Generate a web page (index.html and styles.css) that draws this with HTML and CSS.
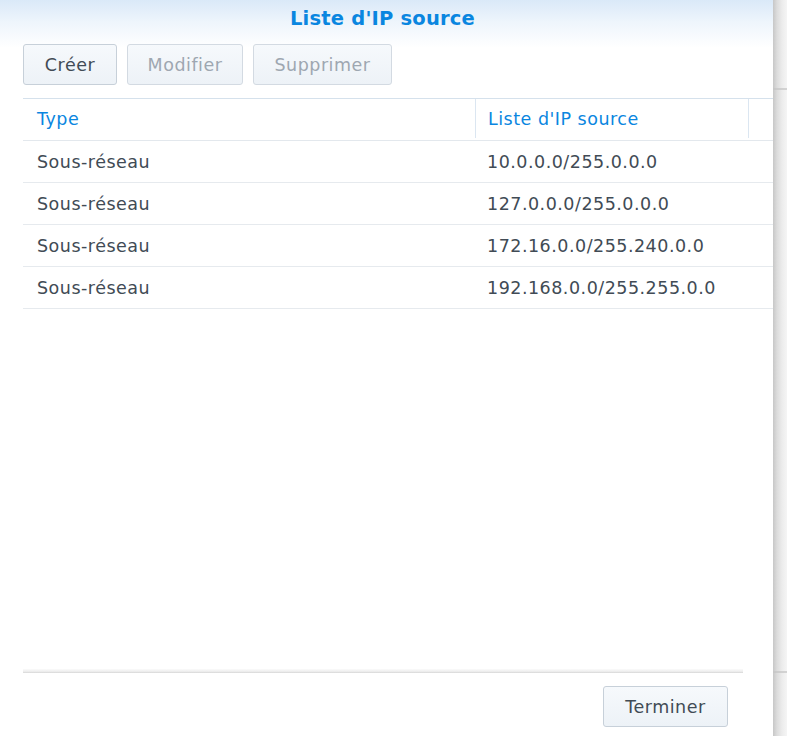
FILE: index.html
```html
<!DOCTYPE html>
<html lang="fr">
<head>
<meta charset="utf-8">
<title>Liste d'IP source</title>
<link rel="stylesheet" href="styles.css">
</head>
<body>
<div class="page">
  <div class="window">
    <div class="title">Liste d'IP source</div>
    <div class="toolbar">
      <button class="btn btn-create">Créer</button>
      <button class="btn btn-modify" disabled>Modifier</button>
      <button class="btn btn-delete" disabled>Supprimer</button>
    </div>
    <div class="grid">
      <div class="grid-head">
        <div class="hcell c1">Type</div>
        <div class="hcell c2">Liste d'IP source</div>
        <div class="hcell c3"></div>
      </div>
      <div class="row"><div class="cell c1">Sous-réseau</div><div class="cell c2">10.0.0.0/255.0.0.0</div></div>
      <div class="row"><div class="cell c1">Sous-réseau</div><div class="cell c2">127.0.0.0/255.0.0.0</div></div>
      <div class="row"><div class="cell c1">Sous-réseau</div><div class="cell c2">172.16.0.0/255.240.0.0</div></div>
      <div class="row"><div class="cell c1">Sous-réseau</div><div class="cell c2">192.168.0.0/255.255.0.0</div></div>
    </div>
    <div class="footer">
      <div class="separator"></div>
      <div class="footer-bar">
        <button class="btn btn-done">Terminer</button>
      </div>
    </div>
  </div>
  <div class="gutter">
    <div class="gline gline-top"></div>
    <div class="gline gline-bottom"></div>
  </div>
</div>
</body>
</html>
```

FILE: styles.css
```css
html, body {
  margin: 0;
  padding: 0;
}
body {
  background: #f4f4f4;
  font-family: "DejaVu Sans", Verdana, sans-serif;
  color: #414b55;
}
.page {
  display: flex;
  width: 787px;
  height: 736px;
  overflow: hidden;
}
.window {
  width: 773px;
  height: 736px;
  flex: none;
  display: flex;
  flex-direction: column;
  background: linear-gradient(to bottom, #dae9f8 0px, #eef5fc 22px, #ffffff 48px) no-repeat, #ffffff;
}
.title {
  height: 36px;
  line-height: 38px;
  text-align: center;
  padding-right: 8px;
  font-weight: bold;
  font-size: 19.5px;
  letter-spacing: 0.2px;
  color: #0a86e0;
}
.toolbar {
  display: flex;
  gap: 10px;
  padding-left: 23px;
  margin-top: 8px;
  height: 41px;
}
.btn {
  font-family: "DejaVu Sans", Verdana, sans-serif;
  font-size: 17.5px;
  letter-spacing: 0.5px;
  height: 41px;
  border: 1px solid #c7d0d9;
  border-radius: 3px;
  background: linear-gradient(to bottom, #f6f9fc, #edf2f7);
  color: #414b55;
  padding: 1px 0 0 0;
  margin: 0;
}
.btn[disabled] {
  color: #9ea7b1;
  border-color: #d3dae2;
}
.btn-create { width: 94px; }
.btn-modify { width: 116px; }
.btn-delete { width: 139px; }
.btn-done { width: 125px; }
.grid {
  flex: 1;
  margin-top: 13px;
  margin-left: 23px;
}
.grid-head {
  display: flex;
  height: 41px;
  border-top: 1px solid #d5e1ec;
  border-bottom: 1px solid #e3e8ed;
  font-size: 17.5px;
  letter-spacing: 0.5px;
  color: #0a86e0;
}
.hcell {
  display: flex;
  align-items: center;
  box-sizing: border-box;
  height: 39px;
}
.c1 { width: 452px; padding-left: 14px; box-sizing: border-box; }
.c2 { width: 273px; padding-left: 12px; box-sizing: border-box; }
.c3 { width: 25px; }
.hcell.c2, .hcell.c3 {
  border-left: 1px solid #dbe6f1;
}
.row {
  display: flex;
  height: 41px;
  border-bottom: 1px solid #e6eaee;
  font-size: 17.5px;
  letter-spacing: 0.5px;
  color: #414b55;
  width: 750px;
}
.cell {
  display: flex;
  align-items: center;
}
.row .c2 { padding-left: 12px; }
.footer {
  height: 67px;
  display: flex;
  flex-direction: column;
}
.separator {
  margin-left: 23px;
  width: 720px;
  height: 4px;
  background: linear-gradient(to bottom, #fbfbfb, #eeeeee 60%, #d6d6d6);
}
.footer-bar {
  display: flex;
  justify-content: flex-end;
  padding-right: 45px;
  padding-top: 13px;
}
.gutter {
  flex: 1;
  height: 736px;
  background: linear-gradient(to right, #c7c7c7 0px, #dcdcdc 4px, #ececec 9px, #f5f5f5 14px);
  display: flex;
  flex-direction: column;
}
.gline {
  height: 2px;
  background: #c4c4c4;
  opacity: 0.7;
}
.gline-top { margin-top: 88px; }
.gline-bottom { margin-top: 581px; }
```
